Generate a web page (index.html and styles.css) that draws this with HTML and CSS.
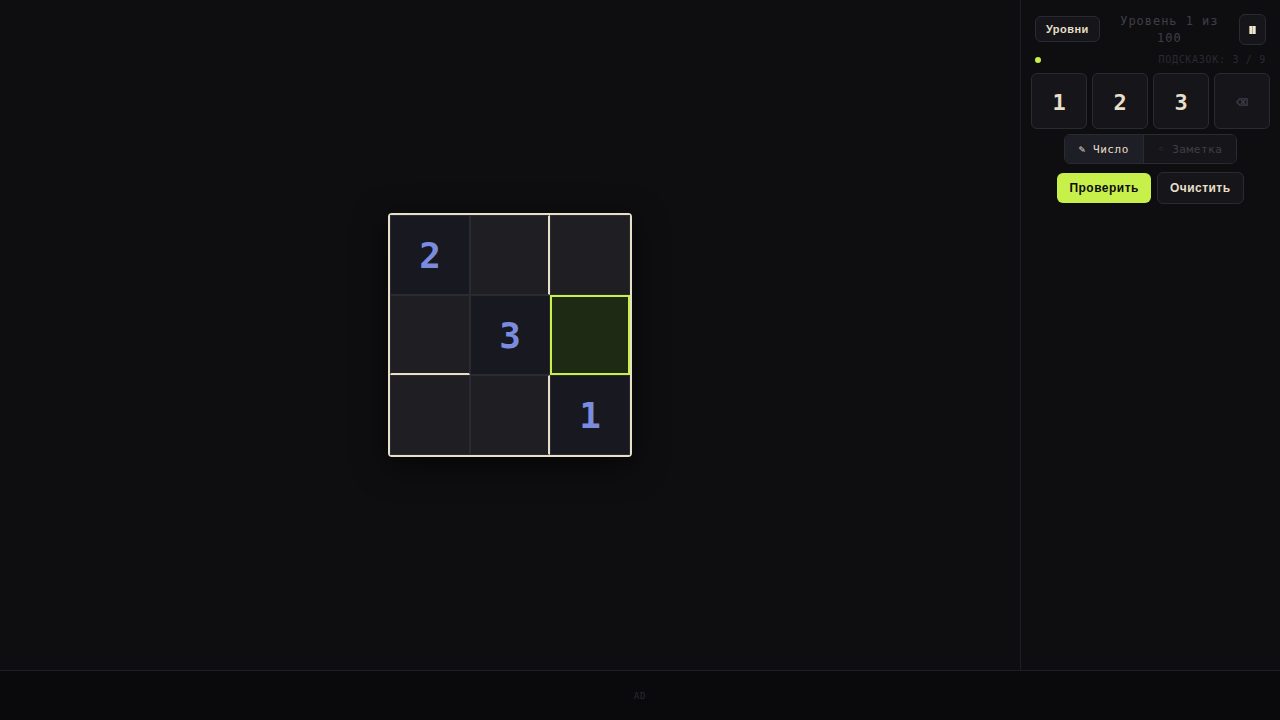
FILE: index.html
```html
<!DOCTYPE html>
<html lang="ru">
<head>
    <meta charset="UTF-8" />
    <meta name="viewport" content="width=device-width, initial-scale=1" />
    <title>Уровень 1 из 100</title>
    <link rel="stylesheet" href="styles.css">
</head>
<body>

    <div class="game">
        <main class="board-area">
            <div class="board">
                <button class="cell given">2</button>
                <button class="cell cage-right" aria-label="Пустая клетка"></button>
                <button class="cell" aria-label="Пустая клетка"></button>
                <button class="cell cage-bottom" aria-label="Пустая клетка"></button>
                <button class="cell given">3</button>
                <button class="cell selected" aria-label="Выбранная клетка"></button>
                <button class="cell" aria-label="Пустая клетка"></button>
                <button class="cell cage-right" aria-label="Пустая клетка"></button>
                <button class="cell given">1</button>
            </div>
        </main>

        <aside class="panel">
            <header class="topbar">
                <button class="btn btn-small">Уровни</button>
                <div class="level">Уровень 1 из 100</div>
                <button class="btn btn-pause" aria-label="Пауза">
                    <svg width="7" height="8" viewBox="0 0 7 8"><path d="M.5 0h6v8h-6z" fill="#b8ab98"/><path d="M.5 0H3v8H.5zM4 0h2.5v8H4z" fill="#f0e6d0"/></svg>
                </button>
            </header>

            <div class="status">
                <span class="dot"></span>
                <span class="hints">Подсказок: 3 / 9</span>
            </div>

            <div class="keypad">
                <button class="key">1</button>
                <button class="key">2</button>
                <button class="key">3</button>
                <button class="key key-erase" aria-label="Стереть">
                    <svg width="12" height="8" viewBox="0 0 12 8" fill="none" stroke="currentColor" stroke-width="1.3"><path d="M3.7.8h7.4v6.4H3.7L.9 4z"/><path d="M5 2l4 4M9 2L5 6"/></svg>
                </button>
            </div>

            <div class="modes">
                <button class="mode active"><span>✎</span> Число</button>
                <button class="mode"><span class="ring">◦</span> Заметка</button>
            </div>

            <div class="actions">
                <button class="btn btn-primary">Проверить</button>
                <button class="btn">Очистить</button>
            </div>
        </aside>
    </div>

    <footer class="ad">AD</footer>

</body>
</html>
```

FILE: styles.css
```css
* { box-sizing: border-box; }

body {
    margin: 0; min-height: 100vh;
    display: flex; flex-direction: column;
    background: #0e0e10; color: #e8dfc8;
    font-family: "DejaVu Sans Mono", monospace;
}
button { font-family: inherit; color: inherit; cursor: pointer; }
svg { display: block; }

.game { flex: 1; display: flex; }
.board-area { flex: 1; display: flex; align-items: center; justify-content: center; }

.board {
    display: grid; grid-template-columns: repeat(3, 80px); grid-auto-rows: 80px;
    border: 2px solid #e8dfc8; border-radius: 4px;
    box-shadow: 0 8px 32px rgba(0, 0, 0, 0.6);
}
.cell {
    padding: 2px 0 0; border: 1px solid #2a2a30; background: #1e1e23;
    font-size: 36px; font-weight: bold; line-height: 40px;
}
.given { background: #181820; color: #7b8cde; }
.cage-right { border-right: 2px solid #e8dfc8; }
.cage-bottom { border-bottom: 2px solid #e8dfc8; }
.selected { border: 2px solid #c8f04a; background: #1f2a14; }

.panel {
    width: 260px; padding: 11px 10px;
    display: flex; flex-direction: column;
    border-left: 1px solid #1e1e26;
}
.topbar { display: flex; align-items: center; justify-content: space-between; padding: 0 4px; }
.level { flex: 1; padding: 2px 16px 0; text-align: center; font-size: 12px; line-height: 17px; letter-spacing: 0.08em; color: #3e3e4a; }

.status { display: flex; align-items: center; justify-content: space-between; padding: 0 4px; margin: 7px 0; }
.dot { width: 6px; height: 6px; border-radius: 50%; background: #c8f04a; }
.hints { font-size: 10px; line-height: 12px; letter-spacing: 0.07em; text-transform: uppercase; color: #2a2a32; }

.btn {
    padding: 0 12px; height: 32px;
    border: 1px solid #2a2a32; border-radius: 6px; background: #16161a;
    font: bold 12px "Liberation Sans", Arial, sans-serif; letter-spacing: 0.04em;
}
.btn-small { height: 26px; padding: 0 10px; font-size: 11px; }
.btn-pause { height: 31px; padding: 2px 9px 0; }
.btn-primary { height: 30px; border: none; background: #c8f04a; color: #0e0e10; }

.keypad { display: grid; grid-template-columns: repeat(4, 1fr); gap: 5px; }
.key {
    display: flex; align-items: center; justify-content: center;
    height: 56px; padding: 2px 0 0;
    border: 1px solid #2a2a32; border-radius: 6px; background: #16161a;
    font-size: 22px; font-weight: bold;
}
.key-erase { color: #3e3e4a; }

.modes {
    display: flex; align-self: center; margin-top: 5px;
    border: 1px solid #2a2a32; border-radius: 6px; overflow: hidden;
}
.mode {
    height: 28px; padding: 0 14px; border: none; background: #16161a;
    font-size: 11px; letter-spacing: 0.05em; color: #3e3e4a;
}
.mode.active { background: #1e1e26; color: #e8dfc8; }
.mode + .mode { border-left: 1px solid #2a2a32; }
.ring { color: #3e3e4a; }

.actions { display: flex; align-items: center; justify-content: center; gap: 6px; margin-top: 8px; }

.ad {
    height: 50px; display: flex; align-items: center; justify-content: center;
    border-top: 1px solid #1e1e26; background: #0a0a0c;
    font-size: 9px; letter-spacing: 0.1em; color: #2a2a32;
}
```
